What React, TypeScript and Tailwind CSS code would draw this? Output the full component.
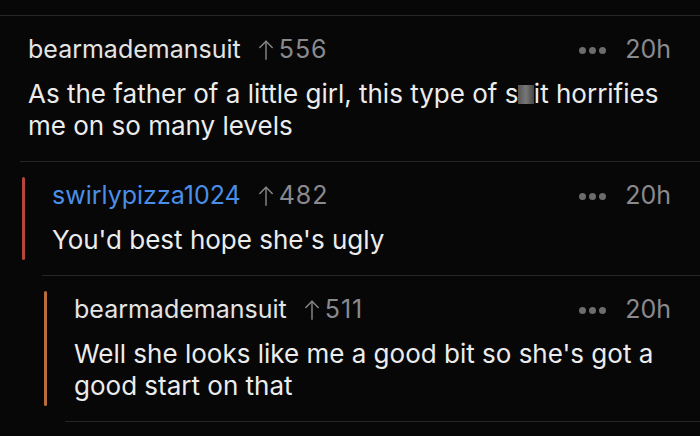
type Comment = {
  user: string;
  votes: number;
  time: string;
  depth: number;
  body: React.ReactNode;
};

const bars = ['', 'bg-[#b5463c]', 'bg-[#b96d3a]'];
const indents = ['ml-0 pl-[28px]', 'ml-[20px] pl-[2px]', 'ml-[42px] pl-[2px]'];

const comments: Comment[] = [
  {
    user: 'bearmademansuit',
    votes: 556,
    time: '20h',
    depth: 0,
    body: (
      <>
        <span>As the father of a little girl, this type of s</span>
        <span className="bg-gradient-to-r from-[#555] via-[#777] to-[#444] bg-[length:100%_19px] bg-[position:0_7px] bg-no-repeat text-transparent">
          h
        </span>
        <span>it horrifies</span>
        <br />
        <span>me on so many levels</span>
      </>
    ),
  },
  { user: 'swirlypizza1024', votes: 482, time: '20h', depth: 1, body: "You'd best hope she's ugly" },
  {
    user: 'bearmademansuit',
    votes: 511,
    time: '20h',
    depth: 2,
    body: "Well she looks like me a good bit so she's got a good start on that",
  },
];

function UpArrow() {
  return (
    <svg width="14" height="20" viewBox="0 0 14 20" fill="none" stroke="currentColor" strokeWidth="1.4" strokeLinecap="round" strokeLinejoin="round">
      <path d="M7 19.2V1.2" />
      <path d="M0.8 7.4 7 1.2l6.2 6.2" />
    </svg>
  );
}

function Dots() {
  return (
    <div className="flex items-center gap-[3px]">
      <span className="h-[7px] w-[7px] rounded-full bg-[#6c6c6c]" />
      <span className="h-[7px] w-[7px] rounded-full bg-[#6c6c6c]" />
      <span className="h-[7px] w-[7px] rounded-full bg-[#6c6c6c]" />
    </div>
  );
}

function CommentRow({ c }: { c: Comment }) {
  return (
    <div className={`flex border-t border-[#262626] ${indents[c.depth]}`}>
      {c.depth > 0 && <div className={`my-[15px] w-[3px] shrink-0 rounded-full ${bars[c.depth]}`} />}
      <div className={`flex-1 pb-[19px] pr-[29px] pt-[19px] ${c.depth > 0 ? 'pl-[27px]' : ''}`}>
        <div className="flex h-[30px] items-center text-[25px]">
          <span className={c.depth === 1 ? 'text-[#4b8ee8]' : 'text-[#e4e4e4]'}>{c.user}</span>
          <span className="ml-[18px] flex items-center gap-[6px] text-[#8a8a8e]">
            <UpArrow />
            <span className="tracking-[1px]">{c.votes}</span>
          </span>
          <div className="ml-auto flex items-center gap-[19px]">
            <Dots />
            <span className="text-[#8a8a8e]">{c.time}</span>
          </div>
        </div>
        <p className="mt-[13px] text-[26px] leading-[32px] text-[#ececec]">{c.body}</p>
      </div>
    </div>
  );
}

export default function App() {
  return (
    <div className="h-[436px] w-[700px] overflow-hidden bg-[#070707] pt-[15px] font-['Inter',sans-serif]">
      {comments.map((c, i) => (
        <CommentRow key={i} c={c} />
      ))}
      <div className="ml-[65px] border-t border-[#262626]" />
    </div>
  );
}
